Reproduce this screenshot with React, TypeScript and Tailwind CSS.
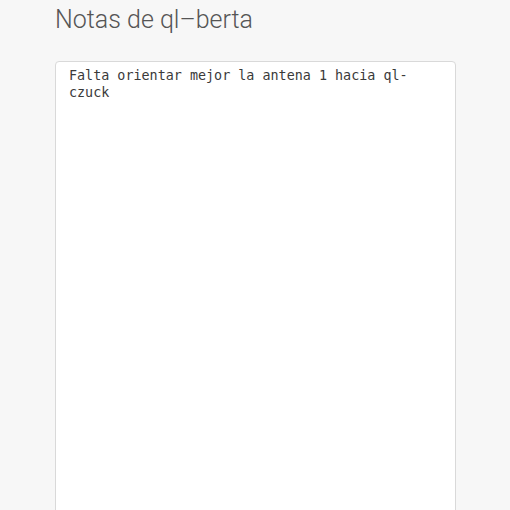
export default function App() {
  return (
    <div className="h-[510px] w-[510px] overflow-hidden bg-[#f7f7f7]">
      <div className="pl-[55px] pr-[54px] pt-[4px]">
        <h1
          className="text-[25px] font-light leading-[32px] text-[#555555]"
          style={{ fontFamily: "Roboto, 'Noto Sans', sans-serif" }}
        >
          Notas de ql–berta
        </h1>
        <textarea
          readOnly
          className="mt-[25px] block h-[480px] w-full resize-none rounded-[4px] border border-[#d9d9d9] bg-white px-[13px] py-[5px] text-[13.4px] leading-[17px] text-[#3a3a3a] outline-none"
          style={{ fontFamily: "'DejaVu Sans Mono', monospace" }}
          defaultValue="Falta orientar mejor la antena 1 hacia ql-czuck"
        />
      </div>
    </div>
  );
}
